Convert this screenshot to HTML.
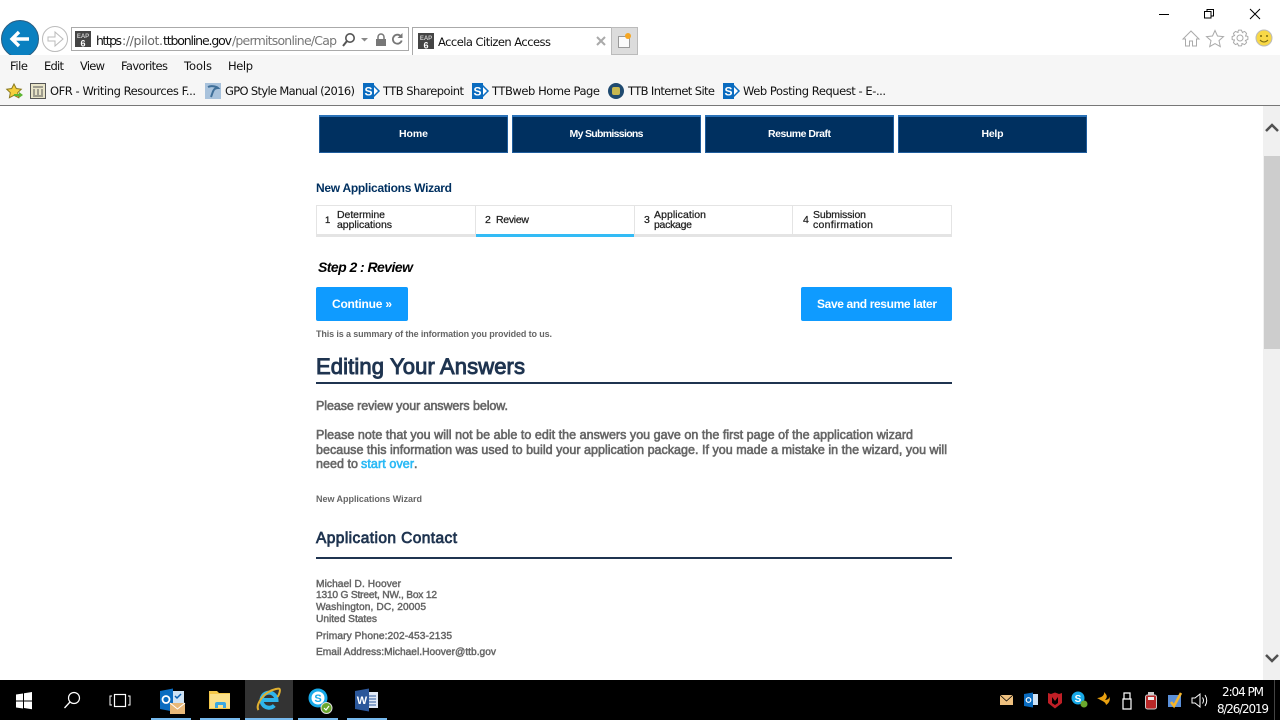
<!DOCTYPE html>
<html><head><meta charset="utf-8"><title>Accela Citizen Access</title>
<style>
html,body{margin:0;padding:0;width:1280px;height:720px;overflow:hidden;background:#fff}
svg{display:block}
text{font-family:"Liberation Sans",sans-serif;white-space:pre}
.ui{font-family:"DejaVu Sans",sans-serif;font-size:11.5px;fill:#111}
.n{font-size:10.5px;font-weight:bold;fill:#fff;text-anchor:middle}
.s{font-size:10.5px;fill:#222;stroke:#222;stroke-width:.25}
.g{fill:#666;stroke:#666;stroke-width:.6;font-size:12.5px}
.b{fill:#666;font-weight:bold}
.a{font-size:10.2px;fill:#666;stroke:#666;stroke-width:.45}
</style></head><body>
<svg width="1280" height="720" viewBox="0 0 1280 720" xmlns="http://www.w3.org/2000/svg">
<rect width="1280" height="720" fill="#fff"/>
<!-- chrome -->
<rect y="55" width="1280" height="50" fill="#f6f6f6"/>
<rect y="105" width="1280" height="1" fill="#777"/>
<!-- back/forward -->
<clipPath id="c"><rect width="120" height="55"/></clipPath>
<g clip-path="url(#c)"><circle cx="20" cy="39" r="18.5" fill="#0a80c0" stroke="#2a5d80"/></g>
<path d="M29 39H12M19 32l-7 7 7 7" fill="none" stroke="#fff" stroke-width="3.4"/>
<circle cx="55" cy="39" r="12.5" fill="#fff" stroke="#bbb"/>
<path d="M48 37h7v-5l8 7-8 7v-5h-7z" fill="none" stroke="#bbb"/>
<!-- address -->
<rect x="71.5" y="27.5" width="337" height="23" fill="#fff" stroke="#aaa"/>
<rect x="75" y="31" width="16" height="16" fill="#444"/>
<text x="83" y="38" font-size="6" font-weight="bold" fill="#ccc" text-anchor="middle">EAP</text>
<text x="83" y="46.5" font-size="9" font-weight="bold" fill="#fff" text-anchor="middle">6</text>
<text class="ui" y="45" style="font-size:12.5px"><tspan x="96" textLength="26" fill="#111">https</tspan><tspan x="122" textLength="41" fill="#666">://pilot.</tspan><tspan x="163" textLength="69" fill="#111">ttbonline.gov</tspan><tspan x="232" textLength="105" fill="#777">/permitsonline/Cap</tspan></text>
<circle cx="350" cy="38" r="4.2" fill="none" stroke="#555" stroke-width="1.6"/><path d="M347 41l-4 5" stroke="#555" stroke-width="2"/>
<path d="M361 38h7l-3.5 3.5z" fill="#888"/>
<rect x="376" y="39" width="10" height="7" fill="#777"/><path d="M378 39v-2a3 3 0 0 1 6 0v2" fill="none" stroke="#777" stroke-width="1.5"/>
<path d="M401 36.500a4.500 4.500 0 1 0 .7 4" fill="none" stroke="#777" stroke-width="1.800"/><path d="M402.500 33v5h-5z" fill="#777"/>
<!-- tab -->
<path d="M412.5 55V27.5H611.5V55" fill="#fff" stroke="#aaa"/>
<rect x="611.500" y="27.500" width="26" height="27" fill="#dcdcdc" stroke="#bbb"/>
<rect x="418" y="33" width="16" height="16" fill="#444"/>
<text x="426" y="40" font-size="6" font-weight="bold" fill="#ccc" text-anchor="middle">EAP</text>
<text x="426" y="48.5" font-size="9" font-weight="bold" fill="#fff" text-anchor="middle">6</text>
<text class="ui" x="438" y="46" textLength="113">Accela Citizen Access</text>
<path d="M597 37l8 8M605 37l-8 8" stroke="#aaa" stroke-width="2"/>
<rect x="618.5" y="36.5" width="11" height="11" fill="#fafafa" stroke="#999"/>
<circle cx="628" cy="36" r="3" fill="#f5a623"/>
<!-- window controls -->
<path d="M1159 14.5h10" stroke="#000"/>
<rect x="1204.5" y="11.5" width="6.5" height="6.5" fill="none" stroke="#000"/><path d="M1207 11V9.5h6.500v6.500H1211" fill="none" stroke="#000"/>
<path d="M1250 9l10 10M1260 9l-10 10" stroke="#000"/>
<!-- right icons -->
<path d="M1191 31l-8 8h2.500v7h4v-5h3v5h4v-7h2.500z" fill="none" stroke="#aaa"/>
<path d="M1215 30.500l2.500 5.500 6 .6-4.500 4 1.300 6-5.300-3-5.300 3 1.300-6-4.500-4 6-.6z" fill="none" stroke="#aaa"/>
<circle cx="1240" cy="38" r="3" fill="none" stroke="#aaa"/>
<g transform="translate(1240 38)" fill="none" stroke="#aaa">
<path d="M5.480 -2.440L7.880 -1.390V1.390L5.480 2.440L5.600 2.150"/>
<path transform="rotate(45)" d="M5.480 -2.440L7.880 -1.390V1.390L5.480 2.440L5.600 2.150"/>
<path transform="rotate(90)" d="M5.480 -2.440L7.880 -1.390V1.390L5.480 2.440L5.600 2.150"/>
<path transform="rotate(135)" d="M5.480 -2.440L7.880 -1.390V1.390L5.480 2.440L5.600 2.150"/>
<path transform="rotate(180)" d="M5.480 -2.440L7.880 -1.390V1.390L5.480 2.440L5.600 2.150"/>
<path transform="rotate(225)" d="M5.480 -2.440L7.880 -1.390V1.390L5.480 2.440L5.600 2.150"/>
<path transform="rotate(270)" d="M5.480 -2.440L7.880 -1.390V1.390L5.480 2.440L5.600 2.150"/>
<path transform="rotate(315)" d="M5.480 -2.440L7.880 -1.390V1.390L5.480 2.440L5.600 2.150"/>
</g>
<circle cx="1264" cy="38" r="8" fill="#f8d847" stroke="#bbb"/>
<circle cx="1261" cy="36" r="1" fill="#7a6a10"/><circle cx="1267" cy="36" r="1" fill="#7a6a10"/>
<path d="M1260 40q4 4 8 0" fill="none" stroke="#7a6a10"/>
<!-- menu -->
<text class="ui" x="10" y="70" textLength="18">File</text>
<text class="ui" x="44" y="70" textLength="20">Edit</text>
<text class="ui" x="80" y="70" textLength="25">View</text>
<text class="ui" x="121" y="70" textLength="47">Favorites</text>
<text class="ui" x="184" y="70" textLength="28">Tools</text>
<text class="ui" x="228" y="70" textLength="25">Help</text>
<text class="ui" x="50" y="95" textLength="146">OFR - Writing Resources F...</text>
<text class="ui" x="225" y="95" textLength="130">GPO Style Manual (2016)</text>
<text class="ui" x="383" y="95" textLength="81">TTB Sharepoint</text>
<text class="ui" x="492" y="95" textLength="108">TTBweb Home Page</text>
<text class="ui" x="628" y="95" textLength="87">TTB Internet Site</text>
<text class="ui" x="743" y="95" textLength="143">Web Posting Request - E-...</text>
<!-- favourites icons -->
<path d="M14 84l2.300 4.500 5 .7-3.600 3.500.9 5-4.600-2.400-4.600 2.400.9-5-3.600-3.500 5-.7z" fill="#f5cf3c" stroke="#8a7a20"/>
<path d="M14 94h5v-2l4 3-4 3v-2h-5z" fill="#5cb531"/>
<rect x="30.500" y="83.500" width="15" height="15" fill="#e8e4c8" stroke="#555"/><path d="M33 87h10M34 89v6M38 89v6M42 89v6M33 96h10" stroke="#555"/>
<rect x="205" y="83" width="16" height="16" fill="#a8c2dc"/><path d="M208 87c4-2 9 0 10 1-5 0-5 4-7 9" fill="none" stroke="#3f6f99" stroke-width="2"/>
<g><path d="M373 85l6 6-6 6" fill="#fff" stroke="#0a6cc0" stroke-width="1.500"/><rect x="363" y="83" width="11" height="16" fill="#0a6cc0"/><text x="368.500" y="95.500" font-size="12" font-weight="bold" fill="#fff" text-anchor="middle">S</text></g>
<g transform="translate(109 0)"><path d="M373 85l6 6-6 6" fill="#fff" stroke="#0a6cc0" stroke-width="1.500"/><rect x="363" y="83" width="11" height="16" fill="#0a6cc0"/><text x="368.500" y="95.500" font-size="12" font-weight="bold" fill="#fff" text-anchor="middle">S</text></g>
<g transform="translate(360 0)"><path d="M373 85l6 6-6 6" fill="#fff" stroke="#0a6cc0" stroke-width="1.500"/><rect x="363" y="83" width="11" height="16" fill="#0a6cc0"/><text x="368.500" y="95.500" font-size="12" font-weight="bold" fill="#fff" text-anchor="middle">S</text></g>
<circle cx="616" cy="91" r="8" fill="#1f4a70"/><rect x="612" y="87" width="8" height="8" rx="2" fill="#c8b850"/>
<!-- nav -->
<g fill="#003060">
<rect x="319" y="115" width="189" height="38"/><rect x="512" y="115" width="189" height="38"/><rect x="705" y="115" width="189" height="38"/><rect x="898" y="115" width="189" height="38"/>
</g>
<g fill="none" stroke="#1e5c9c"><rect x="319.500" y="115.500" width="188" height="37"/><rect x="512.500" y="115.500" width="188" height="37"/><rect x="705.500" y="115.500" width="188" height="37"/><rect x="898.500" y="115.500" width="188" height="37"/></g>
<g fill="#2a72b8"><rect x="319" y="115" width="189" height="2"/><rect x="512" y="115" width="189" height="2"/><rect x="705" y="115" width="189" height="2"/><rect x="898" y="115" width="189" height="2"/></g>
<text class="n" x="413.500" y="137" textLength="29">Home</text>
<text class="n" x="606.500" y="137" textLength="74">My Submissions</text>
<text class="n" x="799.500" y="137" textLength="63">Resume Draft</text>
<text class="n" x="992.500" y="137" textLength="22">Help</text>
<!-- wizard -->
<text x="316" y="192" font-size="12" font-weight="bold" fill="#003060" textLength="136">New Applications Wizard</text>
<rect x="316.500" y="205.500" width="635" height="30" fill="#fff" stroke="#e4e4e4"/>
<path d="M475.500 205v30M634.500 205v30M792.500 205v30" stroke="#e4e4e4"/>
<rect x="316" y="234" width="636" height="3" fill="#e4e4e4"/>
<rect x="476" y="234" width="158" height="3" fill="#33bbf5"/>
<text class="s" x="325" y="223" style="font-size:9.500px">1</text>
<text class="s" x="337" y="218" textLength="48">Determine</text>
<text class="s" x="337" y="228" textLength="55">applications</text>
<text class="s" x="485" y="223">2</text>
<text class="s" x="496" y="223" textLength="33">Review</text>
<text class="s" x="644" y="223">3</text>
<text class="s" x="654" y="218" textLength="52">Application</text>
<text class="s" x="654" y="228" textLength="38">package</text>
<text class="s" x="803" y="223">4</text>
<text class="s" x="813" y="218" textLength="53">Submission</text>
<text class="s" x="813" y="228" textLength="60">confirmation</text>
<text x="318" y="272" font-size="14" font-weight="bold" font-style="italic" fill="#000" textLength="95">Step 2 : Review</text>
<!-- buttons -->
<rect x="316" y="287" width="92" height="34" rx="2" fill="#0f9bff"/>
<rect x="801" y="287" width="151" height="34" rx="2" fill="#0f9bff"/>
<text x="332" y="308" font-size="12" font-weight="bold" fill="#fff" textLength="60">Continue »</text>
<text x="817" y="308" font-size="12" font-weight="bold" fill="#fff" textLength="120">Save and resume later</text>
<text class="b" x="316" y="337" font-size="9" textLength="236">This is a summary of the information you provided to us.</text>
<!-- heading -->
<text x="316" y="374" font-size="22" fill="#1f3450" stroke="#1f3450" stroke-width=".95" textLength="209">Editing Your Answers</text>
<rect x="316" y="382" width="636" height="2" fill="#1f3450"/>
<text class="g" x="316" y="410" textLength="192">Please review your answers below.</text>
<text class="g" x="316" y="439" textLength="597">Please note that you will not be able to edit the answers you gave on the first page of the application wizard</text>
<text class="g" x="316" y="454" textLength="631">because this information was used to build your application package. If you made a mistake in the wizard, you will</text>
<text class="g" x="316" y="468" textLength="42">need to</text>
<text x="361" y="468" font-size="12.500" fill="#2bb9f5" stroke="#2bb9f5" stroke-width=".6" textLength="53">start over</text>
<text class="g" x="414" y="468">.</text>
<text class="b" x="316" y="502" font-size="9" textLength="106">New Applications Wizard</text>
<text x="316" y="543" font-size="15.500" fill="#1f3450" stroke="#1f3450" stroke-width=".75" textLength="141">Application Contact</text>
<rect x="316" y="557" width="636" height="2" fill="#1f3450"/>
<text class="a" x="316" y="587" textLength="85">Michael D. Hoover</text>
<text class="a" x="316" y="598" textLength="121">1310 G Street, NW., Box 12</text>
<text class="a" x="316" y="610" textLength="110">Washington, DC, 20005</text>
<text class="a" x="316" y="622" textLength="61">United States</text>
<text class="a" x="316" y="639" textLength="136">Primary Phone:202-453-2135</text>
<text class="a" x="316" y="655" textLength="180">Email Address:Michael.Hoover@ttb.gov</text>
<!-- scrollbar -->
<rect x="1263" y="106" width="17" height="574" fill="#f0f0f0"/>
<rect x="1264" y="156" width="16" height="193" fill="#cdcdcd"/>
<path d="M1266 131l6-6 6 6" fill="none" stroke="#505050" stroke-width="2.500"/>
<path d="M1266 655l6 6 6-6" fill="none" stroke="#505050" stroke-width="2.500"/>
<!-- taskbar -->
<rect y="680" width="1280" height="40" fill="#000"/>
<rect x="245" y="680" width="48" height="40" fill="#333"/>
<g fill="#76b9ed"><rect x="151" y="718" width="40" height="2"/><rect x="200" y="718" width="40" height="2"/><rect x="245" y="718" width="48" height="2"/><rect x="298" y="718" width="40" height="2"/><rect x="347" y="718" width="40" height="2"/></g>
<path d="M16 694.500l7-1v7h-7zM24 693.300l8-1.300v8.500h-8zM16 701.500h7v7l-7-1zM24 701.500h8v7.800l-8-1.300z" fill="#fff"/>
<circle cx="74" cy="698" r="5.500" fill="none" stroke="#fff" stroke-width="1.200"/><path d="M70 702l-5.500 6" stroke="#fff" stroke-width="1.300"/>
<rect x="114.500" y="694.500" width="11" height="12" fill="none" stroke="#fff" stroke-width="1.200"/><path d="M112 696h-2v9h2M128 696h2v9h-2" fill="none" stroke="#fff"/>
<!-- outlook -->
<rect x="172" y="691" width="12" height="12" fill="#cfe3f5"/><path d="M175 696l2 2 4-4" stroke="#0a5fb0" fill="none" stroke-width="1.500"/>
<path d="M160 691l13-2.500v23l-13-2.500z" fill="#0a6cc0"/><circle cx="166" cy="699.500" r="3.500" fill="none" stroke="#fff" stroke-width="1.800"/>
<rect x="170" y="703" width="15" height="11" fill="#e8b878"/><path d="M170 703l7.500 6 7.500-6" fill="none" stroke="#fff"/>
<!-- explorer -->
<path d="M209 691h8l2 2h11v16h-21z" fill="#f5c84a"/><rect x="210" y="694" width="20" height="14" fill="#fbe08a"/>
<path d="M215 708v-4a2 2 0 0 1 2-2h7a2 2 0 0 1 2 2v4h-3v-3h-5v3z" fill="#3ba7e0"/>
<!-- IE -->
<path d="M261.500 700h15a7.500 7.500 0 1 0-2.200 5.500" fill="none" stroke="#2fb5ea" stroke-width="4"/>
<path d="M258.500 710c-3-4 3-14 10-18c5-3 11-4 11-3c1 1 0 5-2 8" fill="none" stroke="#e0b030" stroke-width="2"/>
<!-- skype -->
<circle cx="318" cy="698" r="9.500" fill="#17a9e8"/><circle cx="318" cy="698" r="6.500" fill="#fff"/>
<text x="318" y="702" font-size="11" font-weight="bold" fill="#17a9e8" text-anchor="middle">S</text>
<circle cx="326.500" cy="708" r="5.500" fill="#6aa82e" stroke="#ddd"/><path d="M324 708l2 2 3-4" fill="none" stroke="#fff" stroke-width="1.200"/>
<!-- word -->
<rect x="366" y="692" width="12" height="16" fill="#dfe8f5"/><path d="M369 696h7M369 699h7M369 702h7M369 705h7" stroke="#2b579a"/>
<path d="M355 691l14-2.500v23l-14-2.500z" fill="#2b579a"/>
<text x="362" y="704" font-size="11" font-weight="bold" fill="#fff" text-anchor="middle">W</text>
<!-- tray -->
<rect x="1000" y="695" width="13" height="10" fill="#eec07f"/><path d="M1000 695l6.500 6 6.500-6" fill="none" stroke="#000" stroke-width=".8"/>
<rect x="1030" y="694" width="8" height="11" fill="#cfe3f5"/><path d="M1024 694l9-1.500v15l-9-1.500z" fill="#0a6cc0"/><circle cx="1028.500" cy="700" r="2.300" fill="none" stroke="#fff" stroke-width="1.200"/>
<path d="M1048 693l3 1 4-1.500 4 1.500 3-1v10l-7 5.500-7-5.500z" fill="#c01f26"/><path d="M1052 697l3 4 3-4v6l-3 2-3-2z" fill="#000"/>
<circle cx="1078" cy="698" r="6.500" fill="#17a9e8"/><text x="1078" y="702" font-size="10" font-weight="bold" fill="#fff" text-anchor="middle">S</text><circle cx="1084" cy="704" r="3.500" fill="#6aa82e"/>
<path d="M1097 698c3 0 8-2 7-6 3 3 4 5 1 8 3 0 5-2 4-4 2 4 0 7-3 9 0-3-4-4-9-7z" fill="#e8a010"/>
<path d="M1123 699v10h8v-10zM1124 699v-6h6v6" fill="none" stroke="#fff" stroke-width="1.200"/>
<rect x="1145.500" y="695" width="11" height="14" rx="2" fill="#b82828" stroke="#ccc"/><rect x="1148" y="692" width="6" height="3" fill="#ccc"/><rect x="1148" y="697" width="6" height="3" fill="#eee"/>
<rect x="1168" y="695" width="13" height="12" fill="#5a8fd8"/><path d="M1171 702l3 4 7-13" fill="none" stroke="#f5b52a" stroke-width="2.500"/>
<path d="M1192 698h3l5-4v13l-5-4h-3z" fill="none" stroke="#fff"/><path d="M1202.500 697.500q2 3 0 6M1205 695q3.500 5.500 0 11" fill="none" stroke="#fff"/>
<text x="1222" y="696" font-size="12" fill="#fff" style="font-family:'DejaVu Sans',sans-serif" textLength="42">2:04 PM</text>
<text x="1217" y="713" font-size="12" fill="#fff" style="font-family:'DejaVu Sans',sans-serif" textLength="52">8/26/2019</text>
<rect x="1274" y="680" width="1" height="40" fill="#444"/>
</svg>
</body></html>
